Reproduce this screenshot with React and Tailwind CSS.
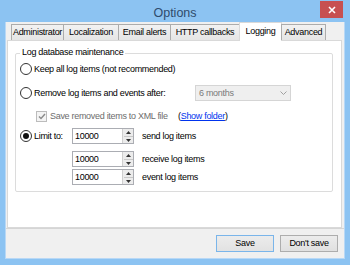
export default function App() {
  const tabs = [
    { label: "Administrator", w: "w-[53px]" },
    { label: "Localization", w: "w-[56px]" },
    { label: "Email alerts", w: "w-[53px]" },
    { label: "HTTP callbacks", w: "w-[70px]" },
    { label: "Logging", w: "w-[43px]", active: true },
    { label: "Advanced", w: "w-[45px]" },
  ];

  const Radio = ({ checked }) => (
    <div className="w-[12px] h-[12px] rounded-full border border-[#333333] bg-white flex items-center justify-center shrink-0">
      {checked && <div className="w-[6px] h-[6px] rounded-full bg-[#111111]" />}
    </div>
  );

  const Spin = ({ value }) => (
    <div className="w-[62px] h-[16px] border border-[#abadb3] bg-white flex items-center">
      <span className="pl-[2px] flex-1">{value}</span>
      <div className="w-[11px] h-[14px] border-l border-[#cfcfcf] bg-[#ececec] flex flex-col items-center justify-center gap-[2px]">
        <svg width="5" height="3" viewBox="0 0 5 3"><path d="M0 3 L2.5 0 L5 3 Z" fill="#333" /></svg>
        <div className="w-[9px] h-px bg-[#c8c8c8]" />
        <svg width="5" height="3" viewBox="0 0 5 3"><path d="M0 0 L2.5 3 L5 0 Z" fill="#333" /></svg>
      </div>
    </div>
  );

  return (
    <div className="w-[350px] h-[265px] bg-[#8cc3f2] flex flex-col overflow-hidden font-['Liberation_Sans',Arial,sans-serif] text-[9px] tracking-[-0.3px] text-black leading-none">
      {/* title bar */}
      <div className="relative h-[22px] shrink-0 flex items-center justify-center">
        <span className="text-[12.5px] tracking-normal text-[#2f4b6c] mt-[4px]">Options</span>
        <div className="absolute right-[7px] top-[1px] w-[23px] h-[17px] bg-[#c75050] flex items-center justify-center">
          <svg width="8" height="8" viewBox="0 0 8 8">
            <path d="M1 1 L7 7 M7 1 L1 7" stroke="white" strokeWidth="1.6" />
          </svg>
        </div>
      </div>

      {/* client area */}
      <div className="mx-[5px] mb-[6px] flex-1 border-x border-b border-[#b8d8f6] bg-[#f0f0f0] flex flex-col">
        {/* tab strip */}
        <div className="h-[18px] shrink-0 flex items-end pl-[5px] relative z-10">
          {tabs.map((t, i) =>
            t.active ? (
              <div
                key={t.label}
                className={`${t.w} h-[19px] -mb-px -ml-px bg-white border-x border-t border-[#d9d9d9] flex items-center justify-center pb-[1px]`}
              >
                {t.label}
              </div>
            ) : (
              <div
                key={t.label}
                className={`${t.w} h-[16px] ${i === 0 ? "" : "-ml-px"} bg-gradient-to-b from-[#f2f2f2] to-[#e5e5e5] border-x border-t border-[#acacac] flex items-center justify-center`}
              >
                {t.label}
              </div>
            )
          )}
        </div>

        {/* panel */}
        <div className="ml-px mr-[2px] h-[188px] shrink-0 bg-white border border-[#d9d9d9]">
          <div className="relative ml-[7px] mt-[12px] w-[318px] h-[139px] border border-[#dcdcdc] rounded-[2px]">
            <div className="absolute left-[4px] -top-[6px] bg-white px-[2px]">Log database maintenance</div>

            <div className="flex flex-col pl-[4px] pt-[7px]">
              {/* row 1 */}
              <div className="h-[16px] flex items-center">
                <Radio />
                <span className="ml-[2px]">Keep all log items (not recommended)</span>
              </div>
              {/* row 2 */}
              <div className="h-[16px] mt-[8px] flex items-center">
                <Radio />
                <span className="ml-[2px] w-[161px]">Remove log items and events after:</span>
                <div className="w-[96px] h-[16px] border border-[#d5d5d5] bg-[#efefef] flex items-center justify-between px-[3px] text-[#7a7a7a]">
                  <span>6 months</span>
                  <svg width="7" height="4" viewBox="0 0 7 4"><path d="M0.5 0.5 L3.5 3.5 L6.5 0.5" stroke="#a0a0a0" fill="none" /></svg>
                </div>
              </div>
              {/* row 3 */}
              <div className="h-[16px] mt-[7px] flex items-center pl-[16px]">
                <div className="w-[11px] h-[11px] border border-[#bcbcbc] bg-[#f4f4f4] flex items-center justify-center shrink-0">
                  <svg width="8" height="7" viewBox="0 0 8 7"><path d="M1 3.5 L3 5.5 L7 1" stroke="#8a8a8a" strokeWidth="1.4" fill="none" /></svg>
                </div>
                <span className="ml-[3px] w-[128px] text-[#6d6d6d]">Save removed items to XML file</span>
                <span>
                  (<span className="text-[#0033ee] underline">Show folder</span>)
                </span>
              </div>
              {/* row 4 */}
              <div className="h-[16px] mt-[4px] flex items-center">
                <Radio checked />
                <span className="ml-[2px] w-[38px]">Limit to:</span>
                <Spin value="10000" />
                <span className="ml-[8px]">send log items</span>
              </div>
              {/* row 5 */}
              <div className="h-[16px] mt-[7px] flex items-center pl-[52px]">
                <Spin value="10000" />
                <span className="ml-[8px]">receive log items</span>
              </div>
              {/* row 6 */}
              <div className="h-[16px] mt-[2px] flex items-center pl-[52px]">
                <Spin value="10000" />
                <span className="ml-[8px]">event log items</span>
              </div>
            </div>
          </div>
        </div>

        {/* button bar */}
        <div className="flex-1 border-t border-[#d5d5d5] flex items-center justify-end gap-[6px] pr-[6px]">
          <div className="w-[58px] h-[17px] border border-[#7ab5ea] bg-gradient-to-b from-[#ececec] to-[#e2e2e2] flex items-center justify-center">
            Save
          </div>
          <div className="w-[58px] h-[17px] border border-[#adadad] bg-gradient-to-b from-[#ececec] to-[#e0e0e0] flex items-center justify-center">
            Don't save
          </div>
        </div>
      </div>
    </div>
  );
}
